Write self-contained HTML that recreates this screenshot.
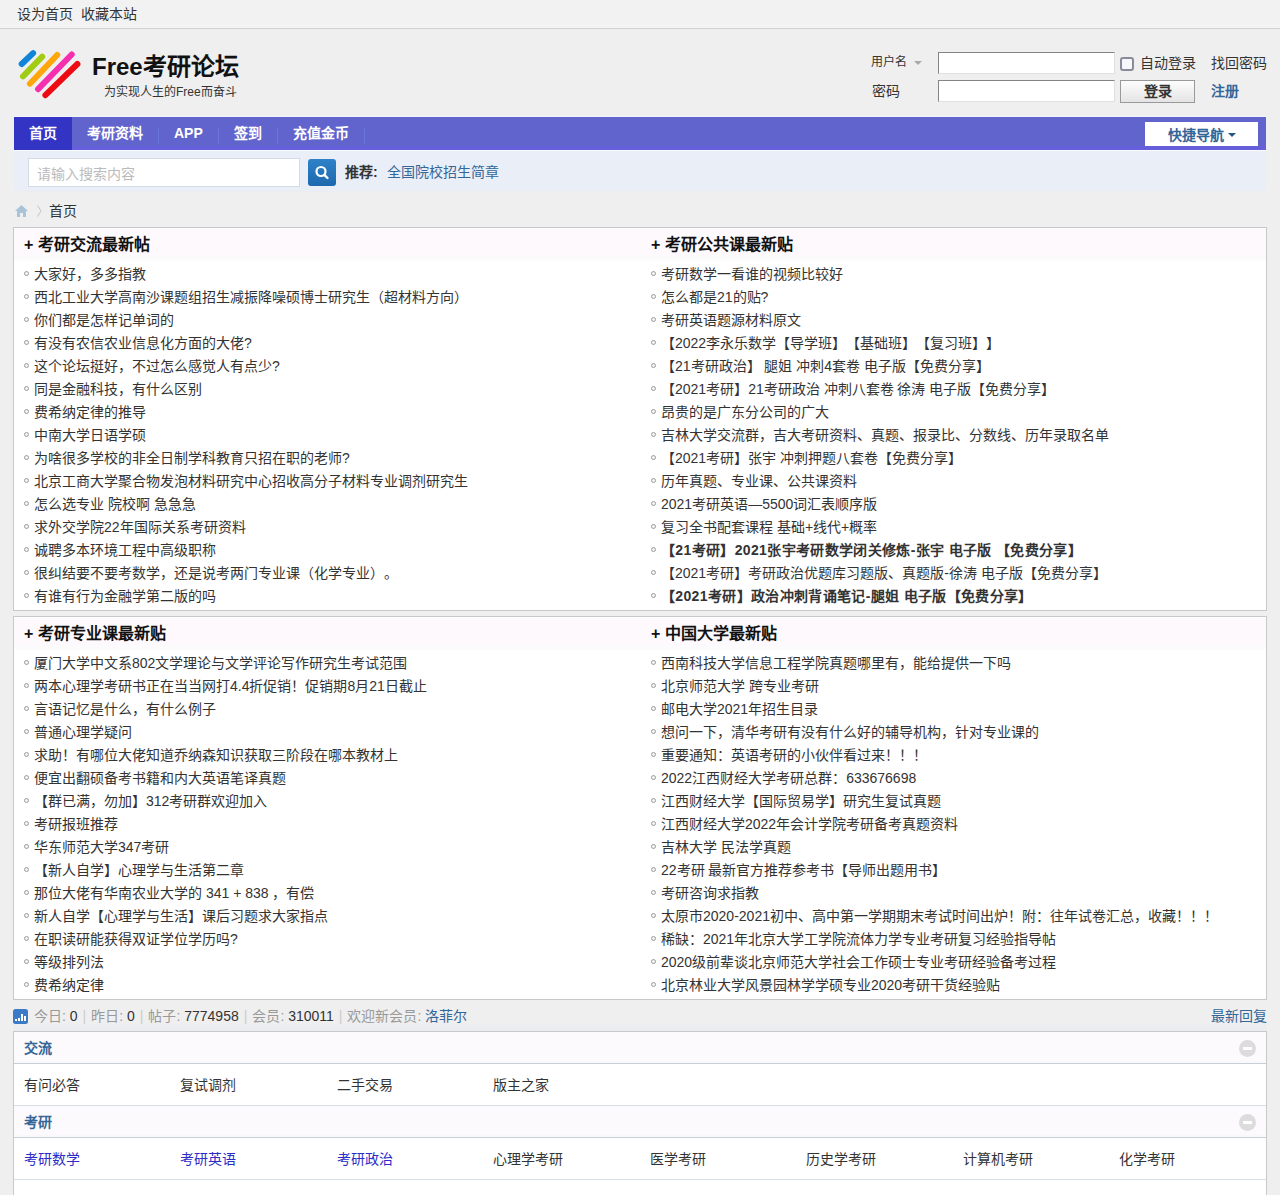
<!DOCTYPE html>
<html lang="zh-CN"><head><meta charset="utf-8">
<style>
*,*:before,*:after{margin:0;padding:0;box-sizing:border-box}
html,body{width:1280px;height:1195px;overflow:hidden}
body{position:relative;text-spacing-trim:space-all;background:#efefef;font-family:"Liberation Sans",sans-serif;font-size:14px;color:#333}
a{color:#333;text-decoration:none}
.a{position:absolute;white-space:nowrap}
#toptb{position:absolute;left:0;top:0;width:1280px;height:29px;background:linear-gradient(#f2f2f2 0,#f2f2f2 25px,#f7f7f7 25px,#f7f7f7 26px,#efefef 26px,#efefef 27px,#f7f7f7 27px);border-bottom:1px solid #d0d0d0}
#toptb span{position:absolute;top:4px;font-size:14px;line-height:20px;color:#333}
.logo{position:absolute;left:16px;top:48px}
.logotxt{position:absolute;left:92px;top:52px;font-size:24px;line-height:30px;font-weight:bold;color:#111}
.slogan{position:absolute;left:104px;top:82px;font-size:12px;line-height:20px;color:#333}
.lbl{position:absolute;font-size:12px;line-height:20px;color:#333}
.inp{position:absolute;left:938px;width:177px;height:22px;background:#fff;border:1px solid;border-color:#848484 #e0e0e0 #e0e0e0 #848484}
.cb{position:absolute;left:1120px;top:57px;width:14px;height:14px;border:2px solid #8a8a98;border-radius:3px;background:#f6f6fd}
.btn{position:absolute;left:1120px;top:80px;width:75px;height:23px;border:1px solid #999;background:linear-gradient(#fdfdfd,#e4e4e4);font-size:14px;line-height:21px;text-align:center;color:#333;font-weight:bold}
#nv{position:absolute;left:14px;top:117px;width:1252px;height:33px;background:linear-gradient(#6264cd 0,#6264cd 88%,#655fdc 88%,#655fdc 100%)}
#nvtop{position:absolute;left:14px;top:116px;width:1252px;height:1px;background:#f4f4fb}
#nvbot{position:absolute;left:14px;top:150px;width:1252px;height:1px;background:#fbfbfd}
#nv ul{list-style:none;position:absolute;left:0;top:0;height:33px}
#nv li{float:left;height:33px;padding-right:1px;position:relative}
#nv li:after{content:"";position:absolute;right:0;top:11px;width:1px;height:16px;background:#6a76d8}
#nv li.on{padding-right:0}#nv li.on:after{display:none}
#nv li a{display:block;height:33px;padding:0 15px;line-height:33px;font-size:14px;font-weight:bold;color:#fff}
#nv li.on a{background:#3333c4}
.qmenu{position:absolute;left:1131px;top:5px;width:113px;height:24px;background:#fff;font-size:14px;font-weight:bold;color:#336699;line-height:26px;padding-left:23px}
.qmenu i{position:absolute;left:83px;top:11px;width:0;height:0;border-left:4px solid transparent;border-right:4px solid transparent;border-top:4px solid #265580}
#scbar{position:absolute;left:14px;top:150px;width:1252px;height:43px;background:linear-gradient(#eaf0f5 0,#e9eef8 6px,#e9eef7 40px,#ecedf1 41px,#efefef 43px)}
.sinp{position:absolute;left:28px;top:158px;width:272px;height:29px;background:#fff;border:1px solid #d4dbe6;font-size:14px;line-height:31px;padding-left:8px;color:#bbb}
.sbtn{position:absolute;left:308px;top:159px;width:28px;height:27px;border-radius:3px;background:linear-gradient(#2f82c8,#1d68ae)}
.crumb{position:absolute;left:49px;top:201px;font-size:14px;line-height:20px;color:#333}
.box{position:absolute;left:13px;width:1254px;height:384px;background:#fff;border:1px solid #c8c8c8}
.box .hd{position:absolute;left:0;top:0;width:100%;height:34px;background:linear-gradient(#fff 0,#fff 1px,#fdf9fd 1px,#fdf9fd 26px,#fcfbfc 31px,#fff 34px)}
.col{position:absolute;top:0;width:620px}
.col h3{position:absolute;left:0;top:7px;font-size:16px;line-height:20px;font-weight:bold;color:#111;white-space:nowrap}
.col ul{position:absolute;left:0;top:35px;list-style:none}
.col li{height:23px;line-height:23px;padding-left:10px;white-space:nowrap;position:relative;color:#333}
.col li:before{content:"";position:absolute;left:0;top:8px;width:5px;height:5px;border-radius:50%;border:1px solid #9c9c9c;background:#f4f4f4}
.col li.b{font-weight:bold;letter-spacing:0.35px}
.stat{position:absolute;top:1006px;font-size:14px;line-height:20px;color:#999;white-space:nowrap}
.stat em{font-style:normal;color:#333}
.stat .p{color:#ccc;margin:0 5px}
.fl{position:absolute;left:13px;top:1031px;width:1254px;height:200px;background:#fff;border:1px solid #c8c8c8}
.fhd{position:absolute;left:0;width:100%;height:32px;background:linear-gradient(#fdfafd 0,#fdfafd 28px,#f7f7f9 30px,#fcfcfd 31px);border-bottom:1px solid #c9ced6}
.fhd b{position:absolute;left:10px;top:6px;font-size:14px;line-height:20px;color:#336699}
.fhd i{position:absolute;left:1225px;top:8px;width:17px;height:17px;border-radius:50%;background:#dcdcdc}
.fhd i:after{content:"";position:absolute;left:4px;top:7px;width:9px;height:3px;background:#fff}
.frow{position:absolute;left:0;width:100%;height:42px;border-bottom:1px solid #d8dee6}
.frow span{position:absolute;top:11px;font-size:14px;line-height:20px;color:#333}
.frow span.bl{color:#2b2bc8}
</style></head><body>
<div id="toptb"><span style="left:17px">设为首页</span><span style="left:81px">收藏本站</span></div>
<svg class="logo" width="70" height="52" viewBox="0 0 70 52">
<g stroke-linecap="round" stroke-width="6" fill="none">
<line x1="5.7" y1="16" x2="17.1" y2="5.1" stroke="#0f84d8"/>
<line x1="7" y1="28.3" x2="26.2" y2="8.7" stroke="#a2cc12"/>
<line x1="13.9" y1="35.7" x2="41.2" y2="7" stroke="#ffa60a"/>
<line x1="22.1" y1="41.2" x2="55.7" y2="6.5" stroke="#f52fae"/>
<line x1="29.4" y1="47.2" x2="61.4" y2="16" stroke="#ee0a12"/>
</g></svg>
<div class="logotxt">Free考研论坛</div>
<div class="slogan">为实现人生的Free而奋斗</div>
<div class="lbl" style="left:871px;top:52px">用户名</div>
<div class="a" style="left:914px;top:61px;width:0;height:0;border-left:4px solid transparent;border-right:4px solid transparent;border-top:4px solid #aaa"></div>
<div class="lbl" style="left:872px;top:81px;font-size:14px">密码</div>
<div class="inp" style="top:52px"></div>
<div class="inp" style="top:80px"></div>
<div class="cb"></div>
<div class="a" style="left:1140px;top:53px;font-size:14px;line-height:20px">自动登录</div>
<div class="a" style="left:1211px;top:53px;font-size:14px;line-height:20px">找回密码</div>
<div class="btn">登录</div>
<div class="a" style="left:1211px;top:81px;font-size:14px;line-height:20px;font-weight:bold;color:#336699">注册</div>
<div id="nv"><ul>
<li class="on"><a>首页</a></li><li><a>考研资料</a></li><li><a>APP</a></li><li><a>签到</a></li><li><a>充值金币</a></li>
</ul><div class="qmenu">快捷导航<i></i></div></div>
<div id="scbar"></div><div id="nvtop"></div><div id="nvbot"></div><div class="a" style="left:14px;top:1024px;width:1252px;height:7px;background:linear-gradient(#ebeef1,#e9edf0)"></div>
<div class="sinp">请输入搜索内容</div>
<div class="sbtn"><svg width="28" height="27" viewBox="0 0 28 27"><circle cx="13" cy="12.5" r="4.5" stroke="#fff" stroke-width="2.2" fill="none"/><line x1="16.3" y1="15.8" x2="19.5" y2="19" stroke="#fff" stroke-width="2.4" stroke-linecap="round"/></svg></div>
<div class="a" style="left:345px;top:162px;font-size:14px;line-height:20px;font-weight:bold;color:#333">推荐:</div>
<div class="a" style="left:387px;top:162px;font-size:14px;line-height:20px;color:#336699">全国院校招生简章</div>
<svg class="a" style="left:14px;top:204px" width="15" height="14" viewBox="0 0 15 14"><path d="M7.5 1 L14 7 L12 7 L12 13 L9 13 L9 9 L6 9 L6 13 L3 13 L3 7 L1 7 Z" fill="#a9c4d8"/></svg>
<svg class="a" style="left:36px;top:202px" width="8" height="16" viewBox="0 0 8 16"><path d="M1.5 3.5 L5 9 L1.5 14.5" stroke="#c4c4c4" stroke-width="1" fill="none"/></svg>
<div class="crumb">首页</div>
<div class="box" style="top:227px">
<div class="hd"></div>
<div class="col" style="left:10px"><h3>+ 考研交流最新帖</h3><ul><li>大家好，多多指教</li><li>西北工业大学高南沙课题组招生减振降噪硕博士研究生（超材料方向）</li><li>你们都是怎样记单词的</li><li>有没有农信农业信息化方面的大佬?</li><li>这个论坛挺好，不过怎么感觉人有点少?</li><li>同是金融科技，有什么区别</li><li>费希纳定律的推导</li><li>中南大学日语学硕</li><li>为啥很多学校的非全日制学科教育只招在职的老师?</li><li>北京工商大学聚合物发泡材料研究中心招收高分子材料专业调剂研究生</li><li>怎么选专业 院校啊 急急急</li><li>求外交学院22年国际关系考研资料</li><li>诚聘多本环境工程中高级职称</li><li>很纠结要不要考数学，还是说考两门专业课（化学专业）。</li><li>有谁有行为金融学第二版的吗</li></ul></div>
<div class="col" style="left:637px"><h3>+ 考研公共课最新贴</h3><ul><li>考研数学一看谁的视频比较好</li><li>怎么都是21的贴?</li><li>考研英语题源材料原文</li><li>【2022李永乐数学【导学班】【基础班】【复习班】】</li><li>【21考研政治】 腿姐 冲刺4套卷 电子版【免费分享】</li><li>【2021考研】21考研政治 冲刺八套卷 徐涛 电子版【免费分享】</li><li>昂贵的是广东分公司的广大</li><li>吉林大学交流群，吉大考研资料、真题、报录比、分数线、历年录取名单</li><li>【2021考研】张宇 冲刺押题八套卷【免费分享】</li><li>历年真题、专业课、公共课资料</li><li>2021考研英语—5500词汇表顺序版</li><li>复习全书配套课程 基础+线代+概率</li><li class="b">【21考研】2021张宇考研数学闭关修炼-张宇 电子版 【免费分享】</li><li>【2021考研】考研政治优题库习题版、真题版-徐涛 电子版【免费分享】</li><li class="b">【2021考研】政治冲刺背诵笔记-腿姐 电子版【免费分享】</li></ul></div>
</div>
<div class="box" style="top:616px">
<div class="hd"></div>
<div class="col" style="left:10px"><h3>+ 考研专业课最新贴</h3><ul><li>厦门大学中文系802文学理论与文学评论写作研究生考试范围</li><li>两本心理学考研书正在当当网打4.4折促销！促销期8月21日截止</li><li>言语记忆是什么，有什么例子</li><li>普通心理学疑问</li><li>求助！有哪位大佬知道乔纳森知识获取三阶段在哪本教材上</li><li>便宜出翻硕备考书籍和内大英语笔译真题</li><li>【群已满，勿加】312考研群欢迎加入</li><li>考研报班推荐</li><li>华东师范大学347考研</li><li>【新人自学】心理学与生活第二章</li><li>那位大佬有华南农业大学的 341 + 838 ，有偿</li><li>新人自学【心理学与生活】课后习题求大家指点</li><li>在职读研能获得双证学位学历吗?</li><li>等级排列法</li><li>费希纳定律</li></ul></div>
<div class="col" style="left:637px"><h3>+ 中国大学最新贴</h3><ul><li>西南科技大学信息工程学院真题哪里有，能给提供一下吗</li><li>北京师范大学 跨专业考研</li><li>邮电大学2021年招生目录</li><li>想问一下，清华考研有没有什么好的辅导机构，针对专业课的</li><li>重要通知：英语考研的小伙伴看过来！！！</li><li>2022江西财经大学考研总群：633676698</li><li>江西财经大学【国际贸易学】研究生复试真题</li><li>江西财经大学2022年会计学院考研备考真题资料</li><li>吉林大学 民法学真题</li><li>22考研 最新官方推荐参考书【导师出题用书】</li><li>考研咨询求指教</li><li>太原市2020-2021初中、高中第一学期期末考试时间出炉！附：往年试卷汇总，收藏！！！</li><li>稀缺：2021年北京大学工学院流体力学专业考研复习经验指导帖</li><li>2020级前辈谈北京师范大学社会工作硕士专业考研经验备考过程</li><li>北京林业大学风景园林学学硕专业2020考研干货经验贴</li></ul></div>
</div>

<svg class="a" style="left:13px;top:1009px" width="15" height="15" viewBox="0 0 15 15"><rect x="0" y="0" width="15" height="15" rx="2.5" fill="#3b7ac6"/><rect x="2" y="10" width="2" height="2" fill="#fff"/><rect x="5" y="9" width="2" height="3" fill="#fff"/><rect x="8" y="5" width="2" height="7" fill="#fff"/><rect x="11" y="7" width="2" height="5" fill="#fff"/></svg>
<div class="stat" style="left:34px">今日: <em>0</em><span class="p">|</span>昨日: <em>0</em><span class="p">|</span>帖子: <em>7774958</em><span class="p">|</span>会员: <em>310011</em><span class="p">|</span>欢迎新会员: <em style="color:#336699">洛菲尔</em></div>
<div class="a" style="left:1211px;top:1006px;font-size:14px;line-height:20px;color:#336699">最新回复</div>
<div class="fl">
<div class="fhd" style="top:0"><b>交流</b><i></i></div>
<div class="frow" style="top:32px"><span style="left:10px">有问必答</span><span style="left:166px">复试调剂</span><span style="left:323px">二手交易</span><span style="left:479px">版主之家</span></div>
<div class="fhd" style="top:74px"><b>考研</b><i></i></div>
<div class="frow" style="top:106px"><span class="bl" style="left:10px">考研数学</span><span class="bl" style="left:166px">考研英语</span><span class="bl" style="left:323px">考研政治</span><span style="left:479px">心理学考研</span><span style="left:636px">医学考研</span><span style="left:792px">历史学考研</span><span style="left:949px">计算机考研</span><span style="left:1105px">化学考研</span></div>
</div>
</body></html>
